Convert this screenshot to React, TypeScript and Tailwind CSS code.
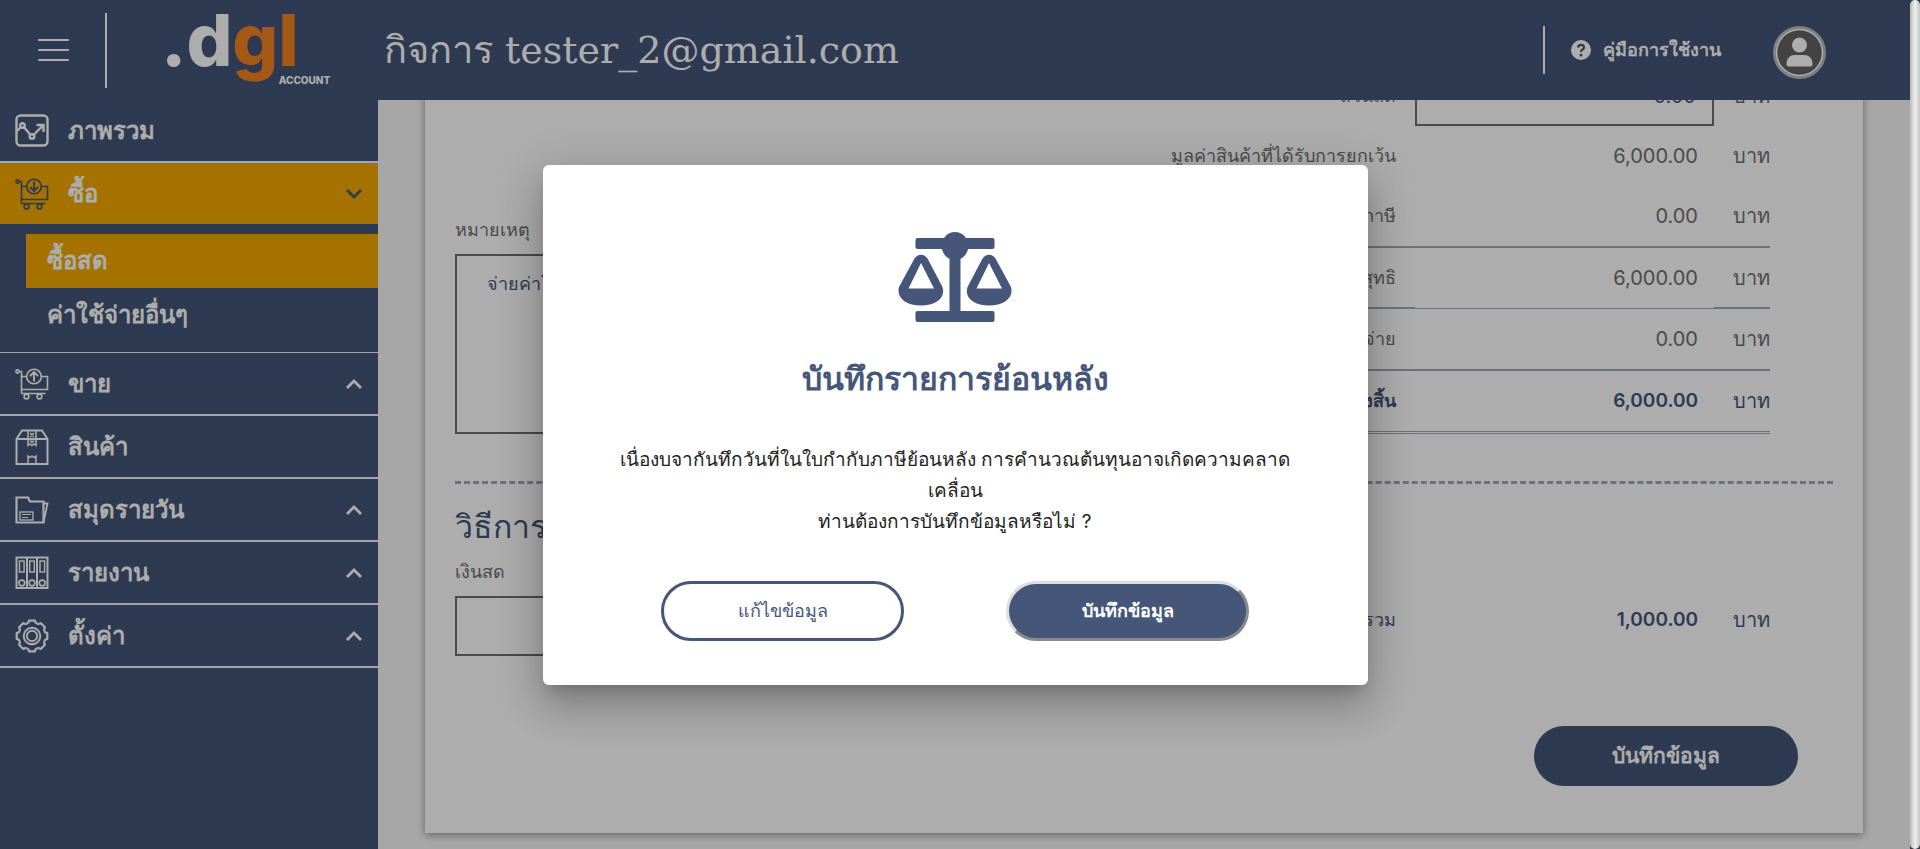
import React from "react";

const thin = {
  fill: "none",
  stroke: "currentColor",
  strokeWidth: 1.3,
} as const;

function OverviewIcon() {
  return (
    <svg viewBox="0 0 34 34" className="size-[34px]" {...thin} strokeWidth={2.4}>
      <rect x="1.500" y="1.500" width="31" height="30" rx="4" />
      <circle cx="7.500" cy="11.500" r="2.300" />
      <circle cx="17" cy="22.500" r="2.300" />
      <path d="M2 17l4-4M9 13l6 7.500M19 20.500l9-9M21.500 11h7v7" />
    </svg>
  );
}

function CartIcon({ up }: { up?: boolean }) {
  return (
    <svg viewBox="0 0 34 34" className="size-[34px]" {...thin} strokeWidth={1.6}>
      <circle cx="2.500" cy="4.500" r="1.600" />
      <path d="M4 4.500h2.500V26.500M6.500 9.500h5M26 9.500h6.500V22.500h-26M6.500 26.500h24" />
      <circle cx="19" cy="9.500" r="7.300" />
      <path
        strokeWidth="1.900"
        d={up ? "M19 14.500V5M15 9l4-4 4 4" : "M19 4.500V14M15 10l4 4 4-4"}
      />
      <circle cx="11.500" cy="29.500" r="2.400" />
      <circle cx="24.500" cy="29.500" r="2.400" />
    </svg>
  );
}

function BoxIcon() {
  return (
    <svg viewBox="0 0 34 36" className="h-9 w-[34px]" {...thin} strokeWidth={2}>
      <path d="M1.500 10L7 1.500h20l5.500 8.500V35h-31zM1.500 10h31" />
      <path
        strokeWidth="1.500"
        d="M13 1.500v15l2-1.500 2 1.500 2-1.500 2 1.500v-15M13 35v-8l2 1.500 2-1.500 2 1.500 2-1.500v8M15 4l4 4m0-4l-4 4M15 11.500l2 2 2-2"
      />
    </svg>
  );
}

function FolderIcon() {
  return (
    <svg viewBox="0 0 34 34" className="size-[34px]" {...thin} strokeWidth={2.2}>
      <path d="M1.500 4.500h11.500l2 4h13.500v21h-27z" />
      <path strokeWidth="1.800" d="M28.500 10.500h4l-4 19" />
      <rect x="5" y="19" width="13" height="8" strokeWidth="1.300" />
      <path strokeWidth="1" d="M7 21.500h9M7 24.500h6" />
    </svg>
  );
}

function BindersIcon() {
  return (
    <svg viewBox="0 0 34 34" className="size-[34px]" {...thin} strokeWidth={2}>
      <rect x="1.500" y="1.500" width="31" height="30.500" />
      <path d="M12 1.500V32M22 1.500V32" />
      <rect x="4.500" y="5" width="4.600" height="11" strokeWidth="1.400" />
      <rect x="14.700" y="5" width="4.600" height="11" strokeWidth="1.400" />
      <rect x="25" y="5" width="4.600" height="11" strokeWidth="1.400" />
      <circle cx="6.800" cy="27" r="2.900" strokeWidth="1.600" />
      <circle cx="17" cy="27" r="2.900" strokeWidth="1.600" />
      <circle cx="27.200" cy="27" r="2.900" strokeWidth="1.600" />
    </svg>
  );
}

const teeth = [0, 45, 90, 135, 180, 225, 270, 315];

function GearIcon() {
  return (
    <svg viewBox="0 0 34 34" className="size-[34px]" {...thin} strokeWidth={2.2} strokeLinejoin="round">
      {teeth.map((a) => (
        <path
          key={a}
          transform={`rotate(${a} 17 17)`}
          d="M11.800 4.500c1.500-.3 2-1 2.200-2.800h6c.2 1.800.7 2.500 2.200 2.800"
        />
      ))}
      <circle cx="17" cy="17" r="8.300" strokeWidth="1.900" />
      <circle cx="17" cy="17" r="5.200" strokeWidth="1.900" />
    </svg>
  );
}

function Chevron({ down }: { down?: boolean }) {
  return (
    <svg viewBox="0 0 16 10" className="ml-auto h-2.5 w-4" fill="none" stroke="currentColor" strokeWidth="2.800">
      <path d={down ? "M1 1l7 7 7-7" : "M1 9l7-7 7 7"} />
    </svg>
  );
}

function ScaleIcon() {
  return (
    <svg viewBox="0 0 114 90" className="h-[90px] w-[114px]" fill="currentColor" aria-hidden="true">
      <rect x="17.500" y="6" width="79" height="11" rx="2" />
      <rect x="17.500" y="79" width="79" height="11" rx="2" />
      <rect x="51.500" y="20" width="11" height="62" />
      <ellipse cx="57" cy="14" rx="13.300" ry="14" />
      <path
        fillRule="evenodd"
        d="M16.500 26.500Q19 22.700 23 22.700t6.500 3.800L44.500 55C48 66 38 73.500 23 73.500S-2 66 1 55zM23 31L10.500 56.500h25.500z"
      />
      <path
        fillRule="evenodd"
        d="M84.500 26.500Q87 22.700 91 22.700t6.500 3.800L113 55C116 66 106 73.500 91 73.500S66 66 69.500 55zM91 31L78.500 56.500H104z"
      />
    </svg>
  );
}

function MenuRow({
  icon,
  label,
  chevron,
  active,
}: {
  icon: React.ReactNode;
  label: string;
  chevron?: "up" | "down";
  active?: boolean;
}) {
  return (
    <a
      href="#"
      className={
        active
          ? "flex h-[61px] items-center bg-[#f4a800] pr-4 pl-[15px] text-[#455679]"
          : "flex h-[63px] items-center border-b-2 border-[#f3f4f6] pr-4 pl-[15px] text-white"
      }
    >
      {icon}
      <span className="ml-[19px] text-2xl font-bold text-white">{label}</span>
      {chevron && <Chevron down={chevron === "down"} />}
    </a>
  );
}

function Sidebar() {
  return (
    <nav className="w-[378px] shrink-0 bg-[#455679]">
      <MenuRow icon={<OverviewIcon />} label="ภาพรวม" />
      <MenuRow icon={<CartIcon />} label="ซื้อ" chevron="down" active />
      <div className="border-b border-[#f3f4f6] py-2.5 pl-[26px] text-2xl font-bold text-white">
        <a href="#" className="flex h-[54px] items-center bg-[#f4a800] pl-[21px]">ซื้อสด</a>
        <a href="#" className="flex h-[54px] items-center pl-[21px]">ค่าใช้จ่ายอื่นๆ</a>
      </div>
      <MenuRow icon={<CartIcon up />} label="ขาย" chevron="up" />
      <MenuRow icon={<BoxIcon />} label="สินค้า" />
      <MenuRow icon={<FolderIcon />} label="สมุดรายวัน" chevron="up" />
      <MenuRow icon={<BindersIcon />} label="รายงาน" chevron="up" />
      <MenuRow icon={<GearIcon />} label="ตั้งค่า" chevron="up" />
    </nav>
  );
}

function Header() {
  return (
    <header className="flex h-[100px] shrink-0 items-center bg-[#455679] text-white">
      <div className="flex w-[384px] shrink-0 items-center">
        <button type="button" aria-label="เมนู" className="ml-[38px] flex w-[31px] flex-col gap-2">
          <span className="h-0.5 w-full rounded bg-white" />
          <span className="h-0.5 w-full rounded bg-white" />
          <span className="h-0.5 w-full rounded bg-white" />
        </button>
        <div className="ml-9 h-[75px] w-0.5 bg-white" />
        <div className="ml-[54px] flex items-end font-['Inter',sans-serif] font-extrabold">
          <div className="pb-5 text-[72px] leading-[80px]">
            .d<span className="text-[#f58220]">gl</span>
          </div>
          <div className="-ml-5 pb-3.5 text-[10px] leading-3">ACCOUNT</div>
        </div>
      </div>
      <h1 className="text-[38px] font-medium whitespace-nowrap font-['DejaVu_Serif',serif]">
        กิจการ tester_2@gmail.com
      </h1>
      <div className="ml-auto flex items-center pr-[84px]">
        <div className="h-12 w-0.5 bg-white" />
        <a href="#" className="ml-[26px] flex items-center gap-3 text-lg font-semibold">
          <svg viewBox="0 0 20 20" className="size-5" aria-hidden="true">
            <circle cx="10" cy="10" r="10" fill="currentColor" />
            <path d="M7 7.500C7.500 3.800 13 4 13 7.500 13 9.500 10 9.500 10 12" fill="none" stroke="#455679" strokeWidth="2.200" />
            <circle cx="10" cy="15" r="1.500" fill="#455679" />
          </svg>
          คู่มือการใช้งาน
        </a>
        <button type="button" aria-label="บัญชีผู้ใช้" className="mt-1 ml-[52px]">
          <svg viewBox="0 0 53 53" className="size-[53px]">
            <circle cx="26.500" cy="26.500" r="25" fill="#646464" stroke="#b9bcc4" strokeWidth="3" />
            <circle cx="26.500" cy="26.500" r="23" fill="none" stroke="#fff" strokeWidth="1.500" />
            <circle cx="26.500" cy="19" r="7.500" fill="#fff" />
            <path d="M13.500 38c0-6 4-9 8-9h10c4 0 8 3 8 9 0 2-1 2.500-2.500 2.500H16c-1.500 0-2.500-.5-2.500-2.500z" fill="#fff" />
          </svg>
        </button>
      </div>
    </header>
  );
}

const unitCell = "w-14 text-right text-xl";
const valueCell = "w-[299px] pr-4 text-right text-xl";
const totalCell = "w-[299px] pr-4 text-right text-[19px] font-semibold";
const labelCell = "w-[265px] pr-[19px] text-right text-lg font-normal whitespace-nowrap";

function Summary() {
  return (
    <table className="mr-[63px] border-separate border-spacing-0 text-[#6e6e6e]">
      <tbody>
        <tr className="h-[60px]">
          <th scope="row" className={labelCell}><label htmlFor="discount">ส่วนลด</label></th>
          <td>
            <input
              id="discount"
              defaultValue="0.00"
              className="block h-[60px] w-[299px] border-2 border-[#6e6e6e] pr-4 text-right text-xl text-[#455679]"
            />
          </td>
          <td className={unitCell}>บาท</td>
        </tr>
        <tr className="h-[60px]">
          <th scope="row" className={labelCell}>มูลค่าสินค้าที่ได้รับการยกเว้น</th>
          <td className={valueCell}>6,000.00</td>
          <td className={unitCell}>บาท</td>
        </tr>
        <tr className="h-[62px] *:border-b-2 *:border-[#9fa8b0]">
          <th scope="row" className={labelCell}>ภาษี</th>
          <td className={valueCell}>0.00</td>
          <td className={unitCell}>บาท</td>
        </tr>
        <tr className="h-[61px] *:border-[#9fa8b0]">
          <th scope="row" className={`${labelCell} border-b-2`}>มูลค่าสุทธิ</th>
          <td className={`${valueCell} border-b`}>6,000.00</td>
          <td className={`${unitCell} border-b-2`}>บาท</td>
        </tr>
        <tr className="h-[62px] *:border-b-2 *:border-[#9fa8b0]">
          <th scope="row" className={labelCell}>หัก ณ ที่จ่าย</th>
          <td className={valueCell}>0.00</td>
          <td className={unitCell}>บาท</td>
        </tr>
        <tr className="h-[63px] text-[#455679] *:border-b-3 *:border-double *:border-[#9fa8b0]">
          <th scope="row" className="w-[265px] pr-[19px] text-right text-lg font-bold">รวมทั้งสิ้น</th>
          <td className={totalCell}>6,000.00</td>
          <td className={unitCell}>บาท</td>
        </tr>
      </tbody>
    </table>
  );
}

function Invoice() {
  return (
    <section className="flex shrink-0 flex-col bg-white px-[30px] pt-12 pb-[47px] shadow-[0_2px_8px_rgba(0,0,0,0.4)]">
      <div className="flex items-end justify-between">
        <div className="flex w-[560px] flex-col">
          <label htmlFor="note" className="mb-2 text-lg leading-8 text-[#6e6e6e]">หมายเหตุ</label>
          <textarea
            id="note"
            defaultValue="จ่ายค่าโฆษณา"
            className="block h-[180px] resize-none border-2 border-[#6e6e6e] px-[30px] py-3.5 text-lg text-[#455679]"
          />
        </div>
        <Summary />
      </div>
      <hr className="mt-[47px] border-t-3 border-dashed border-[#9fa8b0]" />
      <h2 className="mt-[19px] text-[32px] leading-[48px] font-medium text-[#455679]">วิธีการชำระเงิน</h2>
      <div className="flex items-end justify-between">
        <div className="flex w-[300px] flex-col">
          <label htmlFor="cash" className="mt-1 mb-2 text-lg leading-[33px] text-[#6e6e6e]">เงินสด</label>
          <input id="cash" className="h-[60px] border-2 border-[#6e6e6e] px-4 text-right text-xl" />
        </div>
        <table className="mr-[63px] mb-1.5 border-separate border-spacing-0 text-[#455679]">
          <tbody>
            <tr className="h-[60px]">
              <th scope="row" className={labelCell}>ยอดชำระรวม</th>
              <td className={totalCell}>1,000.00</td>
              <td className={unitCell}>บาท</td>
            </tr>
          </tbody>
        </table>
      </div>
      <button
        type="button"
        className="mt-[70px] mr-[35px] h-[60px] w-[264px] self-end rounded-full bg-[#455679] text-[21px] font-semibold text-white"
      >
        บันทึกข้อมูล
      </button>
    </section>
  );
}

function BackdateDialog() {
  return (
    <div className="absolute inset-0 z-10 flex items-center justify-center bg-black/32">
      <div
        role="dialog"
        aria-modal="true"
        aria-labelledby="dialog-title"
        className="flex w-[825px] flex-col items-center rounded-md bg-white pt-[67px] pb-11 text-[#455679] shadow-[0_11px_15px_-7px_rgba(0,0,0,0.2),0_24px_38px_3px_rgba(0,0,0,0.14),0_9px_46px_8px_rgba(0,0,0,0.12)]"
      >
        <ScaleIcon />
        <h2 id="dialog-title" className="mt-8 text-[32px] leading-[50px] font-bold">
          บันทึกรายการย้อนหลัง
        </h2>
        <p className="mt-10 text-center text-[19px] leading-[31px] text-[#222222]">
          เนื่องบจากันทึกวันที่ในใบกำกับภาษีย้อนหลัง การคำนวณต้นทุนอาจเกิดความคลาด
          <br />
          เคลื่อน
          <br />
          ท่านต้องการบันทึกข้อมูลหรือไม่ ?
        </p>
        <div className="mt-11 flex gap-[102px] text-lg">
          <button type="button" className="h-[60px] w-[243px] rounded-full border-3 border-[#455679]">
            แก้ไขข้อมูล
          </button>
          <button
            type="button"
            className="h-[60px] w-[243px] rounded-full border-3 border-t-[#dedede] border-r-[#8a8a8a] border-b-[#8a8a8a] border-l-[#dedede] bg-[#455679] font-bold text-white"
          >
            บันทึกข้อมูล
          </button>
        </div>
      </div>
    </div>
  );
}

export default function App() {
  return (
    <div className="flex h-screen overflow-hidden bg-[#2f3a52] font-['Inter','Noto_Sans',sans-serif]">
      <div className="relative flex min-w-0 flex-1 flex-col">
        <Header />
        <div className="flex min-h-0 flex-1">
          <Sidebar />
          <main className="flex min-w-0 flex-1 flex-col justify-end overflow-hidden bg-[#f6f6f6] pr-[47px] pb-4 pl-[47px]">
            <Invoice />
          </main>
        </div>
        <BackdateDialog />
      </div>
      <div className="w-2.5 shrink-0 rounded-full bg-linear-to-r from-[#b8b8b8] via-[#f0f0f0] to-[#c4c4c4]" />
    </div>
  );
}
